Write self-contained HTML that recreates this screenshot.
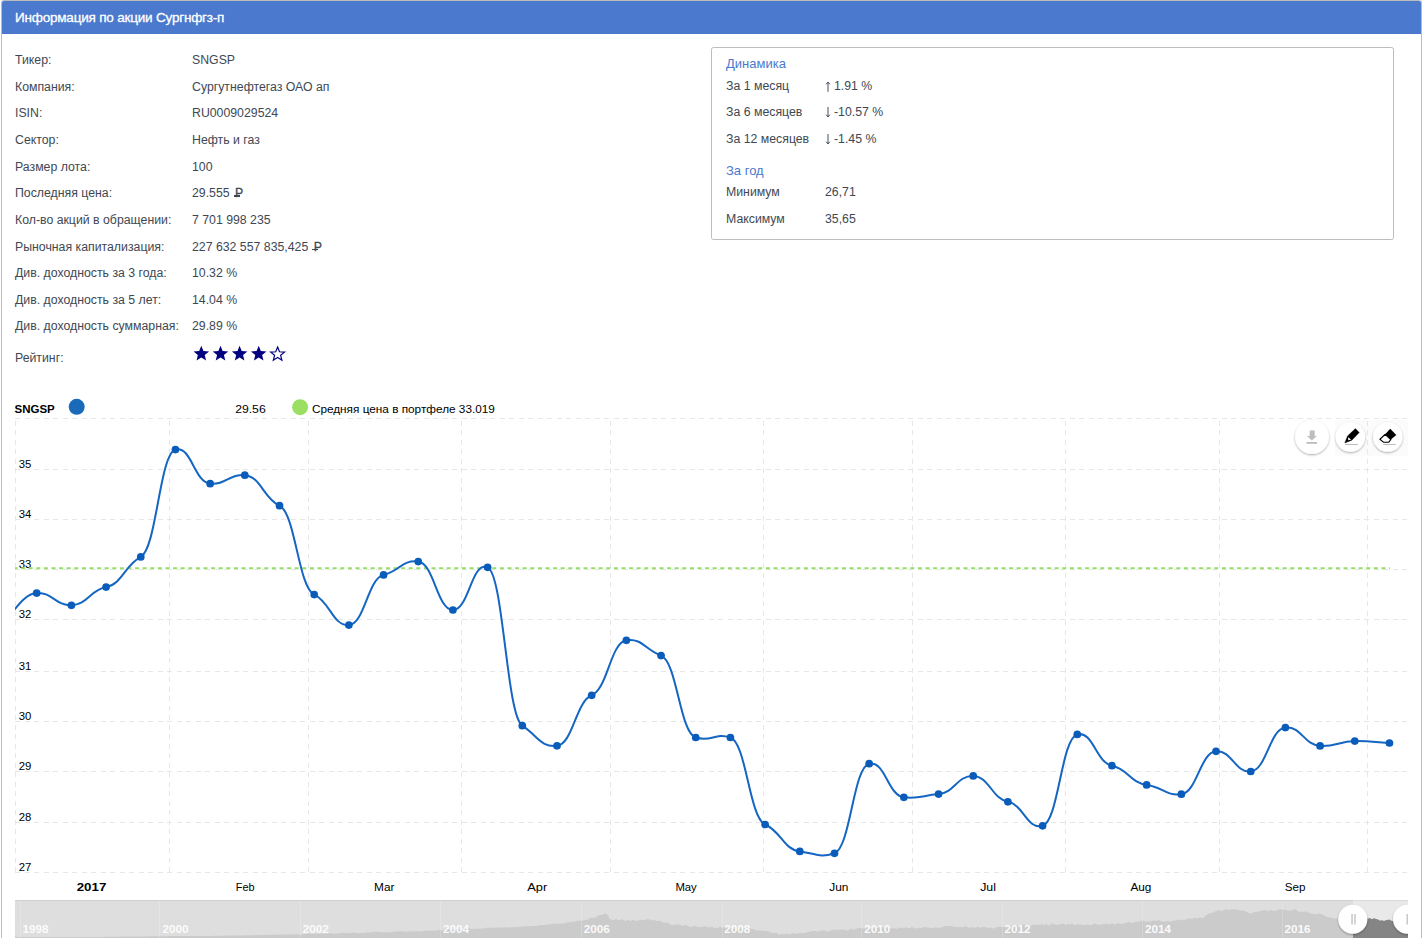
<!DOCTYPE html>
<html><head><meta charset="utf-8">
<style>
html,body{margin:0;padding:0;background:#fff;width:1424px;height:938px;overflow:hidden;position:relative;}
body{font-family:"Liberation Sans",sans-serif;}
.panel{position:absolute;left:1px;top:0;width:1419px;height:960px;border:1px solid #bcbcbc;border-bottom:none;border-radius:3px 3px 0 0;}
.hdr{position:absolute;left:2px;top:1px;width:1419px;height:33px;background:#4a79cd;border-radius:2px 2px 0 0;}
.hdr span{position:absolute;left:13px;top:8.5px;color:#fff;font-size:13.5px;letter-spacing:-0.2px;-webkit-text-stroke:0.3px #fff;white-space:nowrap;}
.row{position:absolute;left:15px;font-size:12.3px;color:#3e4853;white-space:nowrap;}
.val{position:absolute;left:192px;font-size:12.3px;color:#3e4853;white-space:nowrap;}
.box{position:absolute;left:711px;top:47px;width:681px;height:191px;border:1px solid #bdbdbd;border-radius:2.5px;}
.bt{position:absolute;color:#4a79cd;font-size:13px;white-space:nowrap;}
.bl{position:absolute;font-size:12.3px;color:#3e4853;white-space:nowrap;}
.chart{position:absolute;left:0;top:0;}
.rub{position:relative;display:inline-block;margin-left:2px;-webkit-text-stroke:0.3px #3e4853;}
.rub i{position:absolute;left:-1.5px;width:6px;height:1.2px;background:#3e4853;top:9.2px;}
.arr{display:inline-block;width:6px;height:11px;vertical-align:-2px;margin-right:3px;}
</style></head><body>
<div class="panel"></div>
<div class="hdr"><span>Информация по акции Сургнфгз-п</span></div>
<div class="row" style="top:53px">Тикер:</div><div class="val" style="top:53px">SNGSP</div>
<div class="row" style="top:79.7px">Компания:</div><div class="val" style="top:79.7px">Сургутнефтегаз ОАО ап</div>
<div class="row" style="top:106.3px">ISIN:</div><div class="val" style="top:106.3px">RU0009029524</div>
<div class="row" style="top:133px">Сектор:</div><div class="val" style="top:133px">Нефть и газ</div>
<div class="row" style="top:159.7px">Размер лота:</div><div class="val" style="top:159.7px">100</div>
<div class="row" style="top:186.3px">Последняя цена:</div><div class="val" style="top:186.3px">29.555 <span class="rub">Р<i></i></span></div>
<div class="row" style="top:213px">Кол-во акций в обращении:</div><div class="val" style="top:213px">7 701 998 235</div>
<div class="row" style="top:239.7px">Рыночная капитализация:</div><div class="val" style="top:239.7px">227 632 557 835,425 <span class="rub">Р<i></i></span></div>
<div class="row" style="top:266.3px">Див. доходность за 3 года:</div><div class="val" style="top:266.3px">10.32 %</div>
<div class="row" style="top:293px">Див. доходность за 5 лет:</div><div class="val" style="top:293px">14.04 %</div>
<div class="row" style="top:318.7px">Див. доходность суммарная:</div><div class="val" style="top:318.7px">29.89 %</div>
<div class="row" style="top:350.5px">Рейтинг:</div>
<svg style="position:absolute;left:0;top:0" width="300" height="370"><g fill="#000080"><polygon points="201.30,345.80 203.42,351.04 209.05,351.43 204.72,355.06 206.09,360.54 201.30,357.55 196.51,360.54 197.88,355.06 193.55,351.43 199.18,351.04"/><polygon points="220.50,345.80 222.62,351.04 228.25,351.43 223.92,355.06 225.29,360.54 220.50,357.55 215.71,360.54 217.08,355.06 212.75,351.43 218.38,351.04"/><polygon points="239.60,345.80 241.72,351.04 247.35,351.43 243.02,355.06 244.39,360.54 239.60,357.55 234.81,360.54 236.18,355.06 231.85,351.43 237.48,351.04"/><polygon points="258.70,345.80 260.82,351.04 266.45,351.43 262.12,355.06 263.49,360.54 258.70,357.55 253.91,360.54 255.28,355.06 250.95,351.43 256.58,351.04"/></g><polygon points="277.60,347.05 279.48,351.76 284.54,352.09 280.64,355.34 281.89,360.26 277.60,357.55 273.31,360.26 274.56,355.34 270.66,352.09 275.72,351.76" fill="#fff" stroke="#000080" stroke-width="1.2" stroke-linejoin="miter"/></svg>
<div class="box">
<div class="bt" style="left:14px;top:8px">Динамика</div>
<div class="bl" style="left:14px;top:31px">За 1 месяц</div><div class="bl" style="left:113px;top:31px"><svg class="arr" viewBox="0 0 6 11"><path d="M3,10.8 V1.2 M1.1,3.3 L3,1 L4.9,3.3" fill="none" stroke="#3e4853" stroke-width="0.95"/></svg>1.91 %</div>
<div class="bl" style="left:14px;top:57px">За 6 месяцев</div><div class="bl" style="left:113px;top:57px"><svg class="arr" viewBox="0 0 6 11"><path d="M3,0 V9.8 M1.1,7.7 L3,10 L4.9,7.7" fill="none" stroke="#3e4853" stroke-width="0.95"/></svg>-10.57 %</div>
<div class="bl" style="left:14px;top:84px">За 12 месяцев</div><div class="bl" style="left:113px;top:84px"><svg class="arr" viewBox="0 0 6 11"><path d="M3,0 V9.8 M1.1,7.7 L3,10 L4.9,7.7" fill="none" stroke="#3e4853" stroke-width="0.95"/></svg>-1.45 %</div>
<div class="bt" style="left:14px;top:115px">За год</div>
<div class="bl" style="left:14px;top:137px">Минимум</div><div class="bl" style="left:113px;top:137px">26,71</div>
<div class="bl" style="left:14px;top:164px">Максимум</div><div class="bl" style="left:113px;top:164px">35,65</div>
</div>
<svg class="chart" width="1424" height="938" viewBox="0 0 1424 938">
<defs>
<clipPath id="plot"><rect x="15" y="418" width="1392" height="455"/></clipPath>
<clipPath id="nav"><rect x="15" y="900" width="1393" height="38"/></clipPath><clipPath id="sel"><rect x="1353" y="900" width="55" height="38"/></clipPath>
<filter id="sh" x="-30%" y="-30%" width="160%" height="160%"><feGaussianBlur in="SourceAlpha" stdDeviation="1"/><feOffset dy="1"/><feComponentTransfer><feFuncA type="linear" slope="0.35"/></feComponentTransfer><feMerge><feMergeNode/><feMergeNode in="SourceGraphic"/></feMerge></filter>
</defs>
<rect x="1335" y="420" width="73" height="36" fill="#fbfbfb"/>
<g stroke="#e7e7e7" stroke-width="1" stroke-dasharray="5,4.5" fill="none" shape-rendering="crispEdges"><line x1="15" y1="872.5" x2="1407" y2="872.5"/><line x1="15" y1="822.5" x2="1407" y2="822.5"/><line x1="15" y1="771.5" x2="1407" y2="771.5"/><line x1="15" y1="721.5" x2="1407" y2="721.5"/><line x1="15" y1="671.5" x2="1407" y2="671.5"/><line x1="15" y1="619.5" x2="1407" y2="619.5"/><line x1="15" y1="569.5" x2="1407" y2="569.5"/><line x1="15" y1="519.5" x2="1407" y2="519.5"/><line x1="15" y1="469.5" x2="1407" y2="469.5"/><line x1="15" y1="418.5" x2="1407" y2="418.5"/><line x1="15.5" y1="872.4" x2="15.5" y2="418.5"/><line x1="169.5" y1="872.4" x2="169.5" y2="418.5"/><line x1="308.5" y1="872.4" x2="308.5" y2="418.5"/><line x1="461.5" y1="872.4" x2="461.5" y2="418.5"/><line x1="610.5" y1="872.4" x2="610.5" y2="418.5"/><line x1="763.5" y1="872.4" x2="763.5" y2="418.5"/><line x1="912.5" y1="872.4" x2="912.5" y2="418.5"/><line x1="1065.5" y1="872.4" x2="1065.5" y2="418.5"/><line x1="1219.5" y1="872.4" x2="1219.5" y2="418.5"/><line x1="1367.5" y1="872.4" x2="1367.5" y2="418.5"/></g>
<g font-family="Liberation Sans, sans-serif" font-size="10" fill="#000"><text x="18.7" y="870.5" textLength="12.6" lengthAdjust="spacingAndGlyphs">27</text><text x="18.7" y="820.5" textLength="12.6" lengthAdjust="spacingAndGlyphs">28</text><text x="18.7" y="769.5" textLength="12.6" lengthAdjust="spacingAndGlyphs">29</text><text x="18.7" y="719.5" textLength="12.6" lengthAdjust="spacingAndGlyphs">30</text><text x="18.7" y="669.5" textLength="12.6" lengthAdjust="spacingAndGlyphs">31</text><text x="18.7" y="617.5" textLength="12.6" lengthAdjust="spacingAndGlyphs">32</text><text x="18.7" y="567.5" textLength="12.6" lengthAdjust="spacingAndGlyphs">33</text><text x="18.7" y="517.5" textLength="12.6" lengthAdjust="spacingAndGlyphs">34</text><text x="18.7" y="467.5" textLength="12.6" lengthAdjust="spacingAndGlyphs">35</text></g>
<g font-family="Liberation Sans, sans-serif" font-size="10" fill="#000"><text x="76.7" y="890.8" textLength="29.6" lengthAdjust="spacingAndGlyphs" font-weight="bold">2017</text><text x="235.8" y="890.8" textLength="18.8" lengthAdjust="spacingAndGlyphs">Feb</text><text x="374.1" y="890.8" textLength="20.4" lengthAdjust="spacingAndGlyphs">Mar</text><text x="527.2" y="890.8" textLength="20.0" lengthAdjust="spacingAndGlyphs">Apr</text><text x="675.4" y="890.8" textLength="21.4" lengthAdjust="spacingAndGlyphs">May</text><text x="829.2" y="890.8" textLength="19.2" lengthAdjust="spacingAndGlyphs">Jun</text><text x="980.2" y="890.8" textLength="15.8" lengthAdjust="spacingAndGlyphs">Jul</text><text x="1130.4" y="890.8" textLength="21.0" lengthAdjust="spacingAndGlyphs">Aug</text><text x="1284.7" y="890.8" textLength="20.7" lengthAdjust="spacingAndGlyphs">Sep</text></g>
<line x1="13.5" y1="568.2" x2="1390" y2="568.2" stroke="#99dd66" stroke-width="2" stroke-dasharray="4,3.6" clip-path="url(#plot)"/>
<g clip-path="url(#plot)">
<path d="M2.01,622.00 C9.99,620.27 20.74,594.10 36.70,593.10 C52.66,592.10 55.43,605.66 71.39,605.30 C87.34,604.94 90.12,590.00 106.07,587.10 C122.03,584.20 124.80,565.15 140.76,556.90 C156.71,548.65 159.49,453.99 175.44,449.60 C191.40,445.21 194.17,482.16 210.13,483.70 C226.09,485.24 228.86,473.88 244.82,475.20 C260.77,476.52 263.55,498.53 279.50,505.70 C295.46,512.87 298.23,587.43 314.19,594.60 C330.14,601.77 332.92,626.28 348.87,625.10 C364.83,623.92 367.60,578.71 383.56,574.90 C399.52,571.09 402.29,559.49 418.25,561.60 C434.20,563.71 436.98,609.66 452.93,610.00 C468.89,610.34 471.66,560.36 487.62,567.30 C503.57,574.24 506.35,714.99 522.30,725.70 C538.26,736.41 541.03,747.62 556.99,745.80 C572.95,743.98 575.72,701.63 591.68,695.30 C607.63,688.97 610.41,642.68 626.36,640.30 C642.32,637.92 645.09,649.77 661.05,655.60 C677.00,661.43 679.78,732.59 695.73,737.50 C711.69,742.41 714.46,732.28 730.42,737.50 C746.38,742.72 749.15,817.66 765.11,824.50 C781.06,831.34 783.84,849.67 799.79,851.40 C815.75,853.13 818.52,858.56 834.48,853.30 C850.43,848.04 853.21,767.06 869.16,763.70 C885.12,760.34 887.89,795.48 903.85,797.30 C919.81,799.12 922.58,795.38 938.54,794.10 C954.49,792.82 957.27,775.44 973.22,775.90 C989.18,776.36 991.95,798.81 1007.91,801.80 C1023.86,804.79 1026.64,829.84 1042.59,825.80 C1058.55,821.76 1061.32,738.01 1077.28,734.40 C1093.24,730.79 1096.01,762.67 1111.97,765.70 C1127.92,768.73 1130.70,783.19 1146.65,784.90 C1162.61,786.61 1165.38,796.22 1181.34,794.20 C1197.29,792.18 1200.07,752.66 1216.02,751.30 C1231.98,749.94 1234.75,772.92 1250.71,771.50 C1266.67,770.08 1269.44,729.14 1285.40,727.60 C1301.35,726.06 1304.13,745.09 1320.08,745.90 C1336.04,746.71 1338.81,741.27 1354.77,741.10 C1370.72,740.93 1381.48,742.89 1389.45,743.00" fill="none" stroke="#1566c2" stroke-width="2"/>
<g fill="#0a5cba"><circle cx="36.70" cy="593.10" r="3.85"/><circle cx="71.39" cy="605.30" r="3.85"/><circle cx="106.07" cy="587.10" r="3.85"/><circle cx="140.76" cy="556.90" r="3.85"/><circle cx="175.44" cy="449.60" r="3.85"/><circle cx="210.13" cy="483.70" r="3.85"/><circle cx="244.82" cy="475.20" r="3.85"/><circle cx="279.50" cy="505.70" r="3.85"/><circle cx="314.19" cy="594.60" r="3.85"/><circle cx="348.87" cy="625.10" r="3.85"/><circle cx="383.56" cy="574.90" r="3.85"/><circle cx="418.25" cy="561.60" r="3.85"/><circle cx="452.93" cy="610.00" r="3.85"/><circle cx="487.62" cy="567.30" r="3.85"/><circle cx="522.30" cy="725.70" r="3.85"/><circle cx="556.99" cy="745.80" r="3.85"/><circle cx="591.68" cy="695.30" r="3.85"/><circle cx="626.36" cy="640.30" r="3.85"/><circle cx="661.05" cy="655.60" r="3.85"/><circle cx="695.73" cy="737.50" r="3.85"/><circle cx="730.42" cy="737.50" r="3.85"/><circle cx="765.11" cy="824.50" r="3.85"/><circle cx="799.79" cy="851.40" r="3.85"/><circle cx="834.48" cy="853.30" r="3.85"/><circle cx="869.16" cy="763.70" r="3.85"/><circle cx="903.85" cy="797.30" r="3.85"/><circle cx="938.54" cy="794.10" r="3.85"/><circle cx="973.22" cy="775.90" r="3.85"/><circle cx="1007.91" cy="801.80" r="3.85"/><circle cx="1042.59" cy="825.80" r="3.85"/><circle cx="1077.28" cy="734.40" r="3.85"/><circle cx="1111.97" cy="765.70" r="3.85"/><circle cx="1146.65" cy="784.90" r="3.85"/><circle cx="1181.34" cy="794.20" r="3.85"/><circle cx="1216.02" cy="751.30" r="3.85"/><circle cx="1250.71" cy="771.50" r="3.85"/><circle cx="1285.40" cy="727.60" r="3.85"/><circle cx="1320.08" cy="745.90" r="3.85"/><circle cx="1354.77" cy="741.10" r="3.85"/><circle cx="1389.45" cy="743.00" r="3.85"/></g>
</g>
<!-- legend -->
<text x="14.5" y="412.6" font-family="Liberation Sans, sans-serif" font-size="10" font-weight="bold" fill="#000" textLength="40.3" lengthAdjust="spacingAndGlyphs">SNGSP</text>
<circle cx="76.7" cy="406.8" r="8" fill="#1a6aba"/>
<text x="235.2" y="412.6" font-family="Liberation Sans, sans-serif" font-size="10" fill="#000" textLength="30.5" lengthAdjust="spacingAndGlyphs">29.56</text>
<circle cx="300.1" cy="407.2" r="8" fill="#9ade62"/>
<text x="311.9" y="412.6" font-family="Liberation Sans, sans-serif" font-size="10" fill="#000" textLength="183" lengthAdjust="spacingAndGlyphs">Средняя цена в портфеле 33.019</text>
<!-- buttons -->
<g filter="url(#sh)">
<circle cx="1312" cy="437" r="17" fill="#fff"/>
<circle cx="1350.4" cy="437" r="14.7" fill="#fff"/>
<circle cx="1387.7" cy="437" r="14.7" fill="#fff"/>
</g>
<g fill="#bdbdbd"><rect x="1309.7" y="430.5" width="5" height="5.6"/><polygon points="1307,435.9 1316.8,435.9 1311.9,440.4"/><rect x="1306.5" y="442" width="10.5" height="1.8"/></g>
<polygon points="1355.4,428.6 1359.2,432.6 1351.8,440.3 1344.8,442.9 1347.5,436.1" fill="#000" stroke="#000" stroke-width="0.4" stroke-linejoin="round"/>
<polygon points="1348.1,437.2 1351.2,439.4 1348.3,440.2" fill="#fff"/>
<rect x="1345" y="444" width="12.8" height="1" fill="#bbb"/>
<polygon points="1390.2,428.8 1396.3,435 1390.8,439.6 1385.2,434.3" fill="#000"/>
<polygon points="1385.2,434.3 1390.8,439.6 1388.8,442.2 1383.5,442.2 1379.9,439.3" fill="#fff" stroke="#000" stroke-width="1.1" stroke-linejoin="miter"/>
<rect x="1383.3" y="444" width="12.5" height="1" fill="#bbb"/>
<!-- navigator -->
<g clip-path="url(#nav)">
<rect x="15" y="900" width="1393" height="38" fill="#dedede"/>
<rect x="1353" y="900" width="55" height="38" fill="#e9e9e9"/>
<path d="M15.0,938.0 L15.0,936.0 L16.0,937.0 L18.0,937.0 L20.0,937.0 L22.0,937.0 L24.0,937.0 L26.0,937.0 L28.0,937.0 L30.0,937.0 L32.0,937.0 L34.0,937.0 L36.0,937.0 L38.0,937.0 L40.0,937.0 L42.0,937.0 L44.0,937.0 L46.0,937.0 L48.0,937.0 L50.0,937.0 L52.0,937.0 L54.0,937.0 L56.0,937.0 L58.0,937.0 L60.0,937.0 L62.0,937.0 L64.0,937.0 L66.0,937.0 L68.0,937.0 L70.0,937.0 L72.0,937.0 L74.0,937.0 L76.0,937.0 L78.0,937.0 L80.0,937.0 L82.0,937.0 L84.0,937.0 L86.0,937.0 L88.0,937.0 L90.0,937.0 L92.0,937.0 L94.0,937.0 L96.0,937.0 L98.0,937.0 L100.0,937.0 L102.0,937.0 L104.0,937.0 L106.0,936.8 L108.0,936.8 L110.0,936.8 L112.0,936.7 L114.0,936.7 L116.0,936.7 L118.0,936.7 L120.0,936.6 L122.0,936.6 L124.0,936.6 L126.0,936.6 L128.0,936.6 L130.0,936.5 L132.0,936.5 L134.0,936.5 L136.0,936.5 L138.0,936.4 L140.0,936.4 L142.0,936.4 L144.0,936.4 L146.0,936.4 L148.0,936.3 L150.0,936.3 L152.0,936.3 L154.0,936.3 L156.0,936.2 L158.0,936.2 L160.0,936.2 L162.0,936.2 L164.0,936.2 L166.0,936.2 L168.0,936.1 L170.0,936.1 L172.0,936.1 L174.0,936.1 L176.0,936.1 L178.0,936.1 L180.0,936.1 L182.0,936.1 L184.0,936.0 L186.0,936.0 L188.0,936.0 L190.0,936.0 L192.0,936.0 L194.0,936.0 L196.0,936.0 L198.0,935.9 L200.0,935.9 L202.0,935.9 L204.0,935.9 L206.0,935.9 L208.0,935.9 L210.0,935.9 L212.0,935.9 L214.0,935.8 L216.0,935.8 L218.0,935.8 L220.0,935.8 L222.0,935.8 L224.0,935.7 L226.0,935.7 L228.0,935.6 L230.0,935.6 L232.0,935.6 L234.0,935.5 L236.0,935.5 L238.0,935.4 L240.0,935.4 L242.0,935.4 L244.0,935.3 L246.0,935.3 L248.0,935.2 L250.0,935.2 L252.0,935.2 L254.0,935.1 L256.0,935.1 L258.0,935.0 L260.0,935.0 L262.0,935.0 L264.0,934.9 L266.0,934.9 L268.0,934.8 L270.0,934.8 L272.0,934.8 L274.0,934.7 L276.0,934.7 L278.0,934.6 L280.0,934.6 L282.0,934.6 L284.0,934.5 L286.0,934.5 L288.0,934.4 L290.0,934.4 L292.0,934.4 L294.0,934.3 L296.0,934.3 L298.0,934.2 L300.0,934.5 L302.0,934.6 L304.0,934.1 L306.0,934.0 L308.0,933.6 L310.0,933.5 L312.0,933.7 L314.0,933.6 L316.0,934.1 L318.0,933.4 L320.0,933.2 L322.0,934.1 L324.0,933.6 L326.0,933.2 L328.0,933.5 L330.0,932.9 L332.0,933.4 L334.0,933.8 L336.0,933.6 L338.0,933.4 L340.0,932.9 L342.0,933.0 L344.0,932.7 L346.0,933.3 L348.0,933.0 L350.0,933.2 L352.0,932.7 L354.0,932.5 L356.0,933.1 L358.0,933.2 L360.0,933.0 L362.0,932.9 L364.0,932.9 L366.0,932.7 L368.0,932.2 L370.0,932.4 L372.0,932.2 L374.0,931.8 L376.0,931.8 L378.0,932.0 L380.0,931.9 L382.0,932.3 L384.0,932.5 L386.0,931.9 L388.0,932.3 L390.0,932.3 L392.0,932.3 L394.0,931.6 L396.0,931.4 L398.0,931.4 L400.0,931.3 L402.0,931.3 L404.0,931.6 L406.0,931.8 L408.0,931.7 L410.0,931.3 L412.0,931.4 L414.0,931.5 L416.0,930.8 L418.0,931.3 L420.0,931.5 L422.0,931.3 L424.0,931.2 L426.0,930.8 L428.0,930.4 L430.0,930.9 L432.0,930.3 L434.0,930.7 L436.0,930.7 L438.0,930.0 L440.0,929.9 L442.0,930.4 L444.0,930.1 L446.0,929.4 L448.0,929.3 L450.0,929.2 L452.0,929.9 L454.0,929.7 L456.0,929.0 L458.0,929.6 L460.0,929.7 L462.0,929.3 L464.0,928.9 L466.0,929.0 L468.0,928.5 L470.0,928.3 L472.0,929.2 L474.0,928.8 L476.0,928.6 L478.0,928.9 L480.0,928.3 L482.0,928.7 L484.0,928.5 L486.0,927.8 L488.0,927.8 L490.0,927.8 L492.0,927.6 L494.0,927.9 L496.0,927.5 L498.0,927.6 L500.0,927.2 L502.0,927.9 L504.0,927.3 L506.0,927.3 L508.0,927.4 L510.0,927.6 L512.0,927.1 L514.0,927.5 L516.0,927.0 L518.0,927.0 L520.0,926.9 L522.0,926.3 L524.0,926.7 L526.0,926.3 L528.0,926.0 L530.0,926.6 L532.0,925.8 L534.0,925.9 L536.0,925.9 L538.0,925.6 L540.0,925.1 L542.0,925.1 L544.0,925.0 L546.0,925.0 L548.0,924.1 L550.0,924.4 L552.0,923.8 L554.0,923.7 L556.0,924.0 L558.0,923.5 L560.0,923.4 L562.0,923.6 L564.0,923.7 L566.0,922.5 L568.0,922.6 L570.0,922.0 L572.0,921.7 L574.0,921.8 L576.0,921.0 L578.0,920.8 L580.0,920.4 L582.0,920.9 L584.0,920.0 L586.0,919.9 L588.0,919.5 L590.0,917.7 L592.0,917.8 L594.0,918.1 L596.0,917.4 L598.0,915.6 L600.0,915.1 L602.0,915.3 L604.0,913.9 L606.0,913.5 L608.0,915.6 L610.0,919.3 L612.0,919.7 L614.0,920.1 L616.0,918.7 L618.0,920.0 L620.0,920.0 L622.0,919.2 L624.0,920.8 L626.0,921.1 L628.0,919.7 L630.0,921.2 L632.0,920.0 L634.0,920.1 L636.0,921.1 L638.0,920.7 L640.0,919.4 L642.0,919.9 L644.0,920.0 L646.0,919.6 L648.0,919.3 L650.0,919.5 L652.0,920.5 L654.0,919.5 L656.0,920.9 L658.0,921.1 L660.0,920.7 L662.0,921.7 L664.0,922.7 L666.0,922.8 L668.0,922.3 L670.0,924.6 L672.0,924.6 L674.0,925.3 L676.0,924.0 L678.0,924.7 L680.0,924.5 L682.0,926.1 L684.0,925.2 L686.0,925.1 L688.0,925.8 L690.0,926.9 L692.0,926.8 L694.0,925.8 L696.0,925.8 L698.0,927.4 L700.0,926.9 L702.0,927.3 L704.0,926.2 L706.0,926.2 L708.0,927.6 L710.0,927.3 L712.0,926.5 L714.0,928.3 L716.0,927.7 L718.0,928.0 L720.0,926.6 L722.0,928.1 L724.0,926.7 L726.0,928.4 L728.0,927.7 L730.0,927.6 L732.0,928.1 L734.0,929.0 L736.0,927.8 L738.0,927.6 L740.0,928.5 L742.0,928.1 L744.0,927.9 L746.0,928.2 L748.0,928.1 L750.0,928.5 L752.0,929.0 L754.0,929.3 L756.0,930.5 L758.0,929.9 L760.0,930.7 L762.0,930.4 L764.0,931.1 L766.0,930.7 L768.0,931.5 L770.0,931.4 L772.0,933.2 L774.0,933.1 L776.0,932.8 L778.0,933.7 L780.0,934.9 L782.0,933.3 L784.0,934.6 L786.0,933.7 L788.0,933.7 L790.0,934.2 L792.0,933.1 L794.0,933.2 L796.0,933.4 L798.0,933.9 L800.0,932.4 L802.0,933.3 L804.0,932.9 L806.0,932.6 L808.0,932.0 L810.0,931.7 L812.0,930.9 L814.0,930.9 L816.0,930.7 L818.0,931.9 L820.0,930.8 L822.0,930.5 L824.0,930.2 L826.0,931.5 L828.0,931.5 L830.0,930.9 L832.0,930.0 L834.0,929.8 L836.0,929.8 L838.0,930.0 L840.0,929.2 L842.0,929.7 L844.0,929.2 L846.0,930.4 L848.0,930.3 L850.0,929.3 L852.0,928.6 L854.0,929.9 L856.0,928.5 L858.0,928.5 L860.0,927.7 L862.0,928.3 L864.0,928.5 L866.0,928.5 L868.0,927.9 L870.0,928.4 L872.0,927.4 L874.0,927.9 L876.0,927.5 L878.0,928.1 L880.0,927.3 L882.0,927.3 L884.0,927.8 L886.0,927.6 L888.0,928.3 L890.0,928.1 L892.0,928.5 L894.0,928.3 L896.0,928.4 L898.0,928.7 L900.0,927.7 L902.0,927.5 L904.0,928.8 L906.0,927.1 L908.0,928.2 L910.0,928.0 L912.0,926.8 L914.0,928.3 L916.0,928.4 L918.0,927.8 L920.0,928.0 L922.0,928.1 L924.0,926.7 L926.0,927.5 L928.0,927.4 L930.0,928.0 L932.0,927.9 L934.0,927.8 L936.0,927.3 L938.0,927.9 L940.0,927.4 L942.0,927.3 L944.0,926.3 L946.0,925.9 L948.0,926.0 L950.0,926.4 L952.0,925.8 L954.0,927.3 L956.0,926.8 L958.0,927.0 L960.0,927.1 L962.0,927.3 L964.0,927.0 L966.0,926.1 L968.0,927.7 L970.0,927.7 L972.0,927.3 L974.0,927.4 L976.0,927.7 L978.0,926.6 L980.0,928.0 L982.0,927.1 L984.0,926.8 L986.0,927.3 L988.0,928.3 L990.0,927.3 L992.0,928.2 L994.0,928.5 L996.0,927.3 L998.0,926.8 L1000.0,926.8 L1002.0,927.0 L1004.0,927.0 L1006.0,926.6 L1008.0,926.6 L1010.0,925.4 L1012.0,925.4 L1014.0,925.5 L1016.0,926.4 L1018.0,925.4 L1020.0,925.9 L1022.0,924.7 L1024.0,924.7 L1026.0,925.0 L1028.0,925.7 L1030.0,925.6 L1032.0,925.5 L1034.0,924.6 L1036.0,925.0 L1038.0,924.8 L1040.0,924.7 L1042.0,923.9 L1044.0,925.4 L1046.0,923.9 L1048.0,925.3 L1050.0,925.2 L1052.0,923.2 L1054.0,924.0 L1056.0,924.8 L1058.0,925.1 L1060.0,924.1 L1062.0,923.8 L1064.0,923.7 L1066.0,925.2 L1068.0,923.7 L1070.0,924.5 L1072.0,923.7 L1074.0,924.4 L1076.0,925.3 L1078.0,923.7 L1080.0,925.1 L1082.0,924.5 L1084.0,925.3 L1086.0,925.0 L1088.0,924.1 L1090.0,925.4 L1092.0,924.6 L1094.0,923.8 L1096.0,923.7 L1098.0,924.7 L1100.0,924.7 L1102.0,924.3 L1104.0,923.8 L1106.0,924.1 L1108.0,923.8 L1110.0,924.7 L1112.0,922.9 L1114.0,924.2 L1116.0,924.3 L1118.0,922.7 L1120.0,924.1 L1122.0,923.5 L1124.0,923.7 L1126.0,922.4 L1128.0,922.4 L1130.0,922.2 L1132.0,923.3 L1134.0,922.3 L1136.0,921.7 L1138.0,921.7 L1140.0,921.2 L1142.0,920.6 L1144.0,920.6 L1146.0,922.0 L1148.0,920.9 L1150.0,922.1 L1152.0,920.6 L1154.0,920.6 L1156.0,921.0 L1158.0,920.3 L1160.0,920.6 L1162.0,921.7 L1164.0,921.5 L1166.0,921.3 L1168.0,920.9 L1170.0,921.4 L1172.0,921.3 L1174.0,920.5 L1176.0,920.8 L1178.0,919.2 L1180.0,920.4 L1182.0,919.6 L1184.0,920.1 L1186.0,919.6 L1188.0,918.7 L1190.0,918.1 L1192.0,919.6 L1194.0,917.8 L1196.0,918.3 L1198.0,917.9 L1200.0,917.6 L1202.0,918.1 L1204.0,917.4 L1206.0,914.7 L1208.0,914.3 L1210.0,913.0 L1212.0,912.9 L1214.0,912.0 L1216.0,911.0 L1218.0,910.5 L1220.0,910.2 L1222.0,911.2 L1224.0,910.0 L1226.0,909.0 L1228.0,910.0 L1230.0,910.0 L1232.0,909.3 L1234.0,909.0 L1236.0,909.5 L1238.0,909.7 L1240.0,910.6 L1242.0,910.4 L1244.0,911.1 L1246.0,911.5 L1248.0,912.5 L1250.0,913.4 L1252.0,912.9 L1254.0,912.0 L1256.0,911.7 L1258.0,911.7 L1260.0,911.1 L1262.0,910.8 L1264.0,909.9 L1266.0,910.2 L1268.0,911.5 L1270.0,909.7 L1272.0,910.4 L1274.0,910.6 L1276.0,911.0 L1278.0,909.6 L1280.0,909.6 L1282.0,909.5 L1284.0,909.7 L1286.0,909.8 L1288.0,910.7 L1290.0,910.4 L1292.0,910.7 L1294.0,909.3 L1296.0,909.7 L1298.0,911.3 L1300.0,912.0 L1302.0,911.5 L1304.0,912.0 L1306.0,911.2 L1308.0,912.2 L1310.0,913.6 L1312.0,913.7 L1314.0,914.1 L1316.0,914.6 L1318.0,913.5 L1320.0,913.7 L1322.0,914.3 L1324.0,915.5 L1326.0,916.3 L1328.0,917.4 L1330.0,917.4 L1332.0,917.8 L1334.0,918.5 L1336.0,918.4 L1338.0,919.1 L1340.0,917.9 L1342.0,919.1 L1344.0,917.8 L1346.0,918.9 L1348.0,918.1 L1350.0,917.2 L1352.0,916.6 L1354.0,916.8 L1356.0,917.8 L1358.0,918.1 L1360.0,917.1 L1362.0,917.2 L1364.0,918.3 L1366.0,918.6 L1368.0,918.4 L1370.0,918.2 L1372.0,919.2 L1374.0,918.2 L1376.0,919.0 L1378.0,919.5 L1380.0,920.7 L1382.0,920.2 L1384.0,920.9 L1386.0,920.3 L1388.0,919.8 L1390.0,919.8 L1392.0,921.2 L1394.0,920.7 L1396.0,919.9 L1398.0,919.3 L1400.0,920.3 L1402.0,920.6 L1404.0,920.1 L1406.0,919.8 L1408.0,920.3 L1408.0,938.0 Z" fill="#cbcbcb"/>
<g clip-path="url(#sel)"><path d="M15.0,938.0 L15.0,936.0 L16.0,937.0 L18.0,937.0 L20.0,937.0 L22.0,937.0 L24.0,937.0 L26.0,937.0 L28.0,937.0 L30.0,937.0 L32.0,937.0 L34.0,937.0 L36.0,937.0 L38.0,937.0 L40.0,937.0 L42.0,937.0 L44.0,937.0 L46.0,937.0 L48.0,937.0 L50.0,937.0 L52.0,937.0 L54.0,937.0 L56.0,937.0 L58.0,937.0 L60.0,937.0 L62.0,937.0 L64.0,937.0 L66.0,937.0 L68.0,937.0 L70.0,937.0 L72.0,937.0 L74.0,937.0 L76.0,937.0 L78.0,937.0 L80.0,937.0 L82.0,937.0 L84.0,937.0 L86.0,937.0 L88.0,937.0 L90.0,937.0 L92.0,937.0 L94.0,937.0 L96.0,937.0 L98.0,937.0 L100.0,937.0 L102.0,937.0 L104.0,937.0 L106.0,936.8 L108.0,936.8 L110.0,936.8 L112.0,936.7 L114.0,936.7 L116.0,936.7 L118.0,936.7 L120.0,936.6 L122.0,936.6 L124.0,936.6 L126.0,936.6 L128.0,936.6 L130.0,936.5 L132.0,936.5 L134.0,936.5 L136.0,936.5 L138.0,936.4 L140.0,936.4 L142.0,936.4 L144.0,936.4 L146.0,936.4 L148.0,936.3 L150.0,936.3 L152.0,936.3 L154.0,936.3 L156.0,936.2 L158.0,936.2 L160.0,936.2 L162.0,936.2 L164.0,936.2 L166.0,936.2 L168.0,936.1 L170.0,936.1 L172.0,936.1 L174.0,936.1 L176.0,936.1 L178.0,936.1 L180.0,936.1 L182.0,936.1 L184.0,936.0 L186.0,936.0 L188.0,936.0 L190.0,936.0 L192.0,936.0 L194.0,936.0 L196.0,936.0 L198.0,935.9 L200.0,935.9 L202.0,935.9 L204.0,935.9 L206.0,935.9 L208.0,935.9 L210.0,935.9 L212.0,935.9 L214.0,935.8 L216.0,935.8 L218.0,935.8 L220.0,935.8 L222.0,935.8 L224.0,935.7 L226.0,935.7 L228.0,935.6 L230.0,935.6 L232.0,935.6 L234.0,935.5 L236.0,935.5 L238.0,935.4 L240.0,935.4 L242.0,935.4 L244.0,935.3 L246.0,935.3 L248.0,935.2 L250.0,935.2 L252.0,935.2 L254.0,935.1 L256.0,935.1 L258.0,935.0 L260.0,935.0 L262.0,935.0 L264.0,934.9 L266.0,934.9 L268.0,934.8 L270.0,934.8 L272.0,934.8 L274.0,934.7 L276.0,934.7 L278.0,934.6 L280.0,934.6 L282.0,934.6 L284.0,934.5 L286.0,934.5 L288.0,934.4 L290.0,934.4 L292.0,934.4 L294.0,934.3 L296.0,934.3 L298.0,934.2 L300.0,934.5 L302.0,934.6 L304.0,934.1 L306.0,934.0 L308.0,933.6 L310.0,933.5 L312.0,933.7 L314.0,933.6 L316.0,934.1 L318.0,933.4 L320.0,933.2 L322.0,934.1 L324.0,933.6 L326.0,933.2 L328.0,933.5 L330.0,932.9 L332.0,933.4 L334.0,933.8 L336.0,933.6 L338.0,933.4 L340.0,932.9 L342.0,933.0 L344.0,932.7 L346.0,933.3 L348.0,933.0 L350.0,933.2 L352.0,932.7 L354.0,932.5 L356.0,933.1 L358.0,933.2 L360.0,933.0 L362.0,932.9 L364.0,932.9 L366.0,932.7 L368.0,932.2 L370.0,932.4 L372.0,932.2 L374.0,931.8 L376.0,931.8 L378.0,932.0 L380.0,931.9 L382.0,932.3 L384.0,932.5 L386.0,931.9 L388.0,932.3 L390.0,932.3 L392.0,932.3 L394.0,931.6 L396.0,931.4 L398.0,931.4 L400.0,931.3 L402.0,931.3 L404.0,931.6 L406.0,931.8 L408.0,931.7 L410.0,931.3 L412.0,931.4 L414.0,931.5 L416.0,930.8 L418.0,931.3 L420.0,931.5 L422.0,931.3 L424.0,931.2 L426.0,930.8 L428.0,930.4 L430.0,930.9 L432.0,930.3 L434.0,930.7 L436.0,930.7 L438.0,930.0 L440.0,929.9 L442.0,930.4 L444.0,930.1 L446.0,929.4 L448.0,929.3 L450.0,929.2 L452.0,929.9 L454.0,929.7 L456.0,929.0 L458.0,929.6 L460.0,929.7 L462.0,929.3 L464.0,928.9 L466.0,929.0 L468.0,928.5 L470.0,928.3 L472.0,929.2 L474.0,928.8 L476.0,928.6 L478.0,928.9 L480.0,928.3 L482.0,928.7 L484.0,928.5 L486.0,927.8 L488.0,927.8 L490.0,927.8 L492.0,927.6 L494.0,927.9 L496.0,927.5 L498.0,927.6 L500.0,927.2 L502.0,927.9 L504.0,927.3 L506.0,927.3 L508.0,927.4 L510.0,927.6 L512.0,927.1 L514.0,927.5 L516.0,927.0 L518.0,927.0 L520.0,926.9 L522.0,926.3 L524.0,926.7 L526.0,926.3 L528.0,926.0 L530.0,926.6 L532.0,925.8 L534.0,925.9 L536.0,925.9 L538.0,925.6 L540.0,925.1 L542.0,925.1 L544.0,925.0 L546.0,925.0 L548.0,924.1 L550.0,924.4 L552.0,923.8 L554.0,923.7 L556.0,924.0 L558.0,923.5 L560.0,923.4 L562.0,923.6 L564.0,923.7 L566.0,922.5 L568.0,922.6 L570.0,922.0 L572.0,921.7 L574.0,921.8 L576.0,921.0 L578.0,920.8 L580.0,920.4 L582.0,920.9 L584.0,920.0 L586.0,919.9 L588.0,919.5 L590.0,917.7 L592.0,917.8 L594.0,918.1 L596.0,917.4 L598.0,915.6 L600.0,915.1 L602.0,915.3 L604.0,913.9 L606.0,913.5 L608.0,915.6 L610.0,919.3 L612.0,919.7 L614.0,920.1 L616.0,918.7 L618.0,920.0 L620.0,920.0 L622.0,919.2 L624.0,920.8 L626.0,921.1 L628.0,919.7 L630.0,921.2 L632.0,920.0 L634.0,920.1 L636.0,921.1 L638.0,920.7 L640.0,919.4 L642.0,919.9 L644.0,920.0 L646.0,919.6 L648.0,919.3 L650.0,919.5 L652.0,920.5 L654.0,919.5 L656.0,920.9 L658.0,921.1 L660.0,920.7 L662.0,921.7 L664.0,922.7 L666.0,922.8 L668.0,922.3 L670.0,924.6 L672.0,924.6 L674.0,925.3 L676.0,924.0 L678.0,924.7 L680.0,924.5 L682.0,926.1 L684.0,925.2 L686.0,925.1 L688.0,925.8 L690.0,926.9 L692.0,926.8 L694.0,925.8 L696.0,925.8 L698.0,927.4 L700.0,926.9 L702.0,927.3 L704.0,926.2 L706.0,926.2 L708.0,927.6 L710.0,927.3 L712.0,926.5 L714.0,928.3 L716.0,927.7 L718.0,928.0 L720.0,926.6 L722.0,928.1 L724.0,926.7 L726.0,928.4 L728.0,927.7 L730.0,927.6 L732.0,928.1 L734.0,929.0 L736.0,927.8 L738.0,927.6 L740.0,928.5 L742.0,928.1 L744.0,927.9 L746.0,928.2 L748.0,928.1 L750.0,928.5 L752.0,929.0 L754.0,929.3 L756.0,930.5 L758.0,929.9 L760.0,930.7 L762.0,930.4 L764.0,931.1 L766.0,930.7 L768.0,931.5 L770.0,931.4 L772.0,933.2 L774.0,933.1 L776.0,932.8 L778.0,933.7 L780.0,934.9 L782.0,933.3 L784.0,934.6 L786.0,933.7 L788.0,933.7 L790.0,934.2 L792.0,933.1 L794.0,933.2 L796.0,933.4 L798.0,933.9 L800.0,932.4 L802.0,933.3 L804.0,932.9 L806.0,932.6 L808.0,932.0 L810.0,931.7 L812.0,930.9 L814.0,930.9 L816.0,930.7 L818.0,931.9 L820.0,930.8 L822.0,930.5 L824.0,930.2 L826.0,931.5 L828.0,931.5 L830.0,930.9 L832.0,930.0 L834.0,929.8 L836.0,929.8 L838.0,930.0 L840.0,929.2 L842.0,929.7 L844.0,929.2 L846.0,930.4 L848.0,930.3 L850.0,929.3 L852.0,928.6 L854.0,929.9 L856.0,928.5 L858.0,928.5 L860.0,927.7 L862.0,928.3 L864.0,928.5 L866.0,928.5 L868.0,927.9 L870.0,928.4 L872.0,927.4 L874.0,927.9 L876.0,927.5 L878.0,928.1 L880.0,927.3 L882.0,927.3 L884.0,927.8 L886.0,927.6 L888.0,928.3 L890.0,928.1 L892.0,928.5 L894.0,928.3 L896.0,928.4 L898.0,928.7 L900.0,927.7 L902.0,927.5 L904.0,928.8 L906.0,927.1 L908.0,928.2 L910.0,928.0 L912.0,926.8 L914.0,928.3 L916.0,928.4 L918.0,927.8 L920.0,928.0 L922.0,928.1 L924.0,926.7 L926.0,927.5 L928.0,927.4 L930.0,928.0 L932.0,927.9 L934.0,927.8 L936.0,927.3 L938.0,927.9 L940.0,927.4 L942.0,927.3 L944.0,926.3 L946.0,925.9 L948.0,926.0 L950.0,926.4 L952.0,925.8 L954.0,927.3 L956.0,926.8 L958.0,927.0 L960.0,927.1 L962.0,927.3 L964.0,927.0 L966.0,926.1 L968.0,927.7 L970.0,927.7 L972.0,927.3 L974.0,927.4 L976.0,927.7 L978.0,926.6 L980.0,928.0 L982.0,927.1 L984.0,926.8 L986.0,927.3 L988.0,928.3 L990.0,927.3 L992.0,928.2 L994.0,928.5 L996.0,927.3 L998.0,926.8 L1000.0,926.8 L1002.0,927.0 L1004.0,927.0 L1006.0,926.6 L1008.0,926.6 L1010.0,925.4 L1012.0,925.4 L1014.0,925.5 L1016.0,926.4 L1018.0,925.4 L1020.0,925.9 L1022.0,924.7 L1024.0,924.7 L1026.0,925.0 L1028.0,925.7 L1030.0,925.6 L1032.0,925.5 L1034.0,924.6 L1036.0,925.0 L1038.0,924.8 L1040.0,924.7 L1042.0,923.9 L1044.0,925.4 L1046.0,923.9 L1048.0,925.3 L1050.0,925.2 L1052.0,923.2 L1054.0,924.0 L1056.0,924.8 L1058.0,925.1 L1060.0,924.1 L1062.0,923.8 L1064.0,923.7 L1066.0,925.2 L1068.0,923.7 L1070.0,924.5 L1072.0,923.7 L1074.0,924.4 L1076.0,925.3 L1078.0,923.7 L1080.0,925.1 L1082.0,924.5 L1084.0,925.3 L1086.0,925.0 L1088.0,924.1 L1090.0,925.4 L1092.0,924.6 L1094.0,923.8 L1096.0,923.7 L1098.0,924.7 L1100.0,924.7 L1102.0,924.3 L1104.0,923.8 L1106.0,924.1 L1108.0,923.8 L1110.0,924.7 L1112.0,922.9 L1114.0,924.2 L1116.0,924.3 L1118.0,922.7 L1120.0,924.1 L1122.0,923.5 L1124.0,923.7 L1126.0,922.4 L1128.0,922.4 L1130.0,922.2 L1132.0,923.3 L1134.0,922.3 L1136.0,921.7 L1138.0,921.7 L1140.0,921.2 L1142.0,920.6 L1144.0,920.6 L1146.0,922.0 L1148.0,920.9 L1150.0,922.1 L1152.0,920.6 L1154.0,920.6 L1156.0,921.0 L1158.0,920.3 L1160.0,920.6 L1162.0,921.7 L1164.0,921.5 L1166.0,921.3 L1168.0,920.9 L1170.0,921.4 L1172.0,921.3 L1174.0,920.5 L1176.0,920.8 L1178.0,919.2 L1180.0,920.4 L1182.0,919.6 L1184.0,920.1 L1186.0,919.6 L1188.0,918.7 L1190.0,918.1 L1192.0,919.6 L1194.0,917.8 L1196.0,918.3 L1198.0,917.9 L1200.0,917.6 L1202.0,918.1 L1204.0,917.4 L1206.0,914.7 L1208.0,914.3 L1210.0,913.0 L1212.0,912.9 L1214.0,912.0 L1216.0,911.0 L1218.0,910.5 L1220.0,910.2 L1222.0,911.2 L1224.0,910.0 L1226.0,909.0 L1228.0,910.0 L1230.0,910.0 L1232.0,909.3 L1234.0,909.0 L1236.0,909.5 L1238.0,909.7 L1240.0,910.6 L1242.0,910.4 L1244.0,911.1 L1246.0,911.5 L1248.0,912.5 L1250.0,913.4 L1252.0,912.9 L1254.0,912.0 L1256.0,911.7 L1258.0,911.7 L1260.0,911.1 L1262.0,910.8 L1264.0,909.9 L1266.0,910.2 L1268.0,911.5 L1270.0,909.7 L1272.0,910.4 L1274.0,910.6 L1276.0,911.0 L1278.0,909.6 L1280.0,909.6 L1282.0,909.5 L1284.0,909.7 L1286.0,909.8 L1288.0,910.7 L1290.0,910.4 L1292.0,910.7 L1294.0,909.3 L1296.0,909.7 L1298.0,911.3 L1300.0,912.0 L1302.0,911.5 L1304.0,912.0 L1306.0,911.2 L1308.0,912.2 L1310.0,913.6 L1312.0,913.7 L1314.0,914.1 L1316.0,914.6 L1318.0,913.5 L1320.0,913.7 L1322.0,914.3 L1324.0,915.5 L1326.0,916.3 L1328.0,917.4 L1330.0,917.4 L1332.0,917.8 L1334.0,918.5 L1336.0,918.4 L1338.0,919.1 L1340.0,917.9 L1342.0,919.1 L1344.0,917.8 L1346.0,918.9 L1348.0,918.1 L1350.0,917.2 L1352.0,916.6 L1354.0,916.8 L1356.0,917.8 L1358.0,918.1 L1360.0,917.1 L1362.0,917.2 L1364.0,918.3 L1366.0,918.6 L1368.0,918.4 L1370.0,918.2 L1372.0,919.2 L1374.0,918.2 L1376.0,919.0 L1378.0,919.5 L1380.0,920.7 L1382.0,920.2 L1384.0,920.9 L1386.0,920.3 L1388.0,919.8 L1390.0,919.8 L1392.0,921.2 L1394.0,920.7 L1396.0,919.9 L1398.0,919.3 L1400.0,920.3 L1402.0,920.6 L1404.0,920.1 L1406.0,919.8 L1408.0,920.3 L1408.0,938.0 Z" fill="#858585"/></g>
<g stroke="#fff" stroke-opacity="0.18" stroke-width="1"><line x1="20.5" y1="901" x2="20.5" y2="938"/><line x1="159.5" y1="901" x2="159.5" y2="938"/><line x1="300.5" y1="901" x2="300.5" y2="938"/><line x1="440.5" y1="901" x2="440.5" y2="938"/><line x1="581.5" y1="901" x2="581.5" y2="938"/><line x1="722.5" y1="901" x2="722.5" y2="938"/><line x1="861.5" y1="901" x2="861.5" y2="938"/><line x1="1002.5" y1="901" x2="1002.5" y2="938"/><line x1="1142.5" y1="901" x2="1142.5" y2="938"/><line x1="1282.5" y1="901" x2="1282.5" y2="938"/></g>
<rect x="15" y="900" width="1338" height="1" fill="#cfcfcf"/><rect x="1353" y="900" width="55" height="1" fill="#dadada"/>
<g font-family="Liberation Sans, sans-serif" font-size="10" font-weight="bold" fill="#fff" fill-opacity="0.92"><text x="22.4" y="933.0" textLength="26.0" lengthAdjust="spacingAndGlyphs">1998</text><text x="162.5" y="933.0" textLength="26.0" lengthAdjust="spacingAndGlyphs">2000</text><text x="302.8" y="933.0" textLength="26.0" lengthAdjust="spacingAndGlyphs">2002</text><text x="443.0" y="933.0" textLength="26.0" lengthAdjust="spacingAndGlyphs">2004</text><text x="583.8" y="933.0" textLength="26.0" lengthAdjust="spacingAndGlyphs">2006</text><text x="724.3" y="933.0" textLength="26.0" lengthAdjust="spacingAndGlyphs">2008</text><text x="864.3" y="933.0" textLength="26.0" lengthAdjust="spacingAndGlyphs">2010</text><text x="1004.5" y="933.0" textLength="26.0" lengthAdjust="spacingAndGlyphs">2012</text><text x="1145.0" y="933.0" textLength="26.0" lengthAdjust="spacingAndGlyphs">2014</text><text x="1284.5" y="933.0" textLength="26.0" lengthAdjust="spacingAndGlyphs">2016</text></g>
<g filter="url(#sh)"><circle cx="1352.8" cy="919.3" r="14.5" fill="#fff"/><circle cx="1407.5" cy="919.3" r="14.5" fill="#fff"/></g>
<g fill="#c8c8c8"><rect x="1351.3" y="914" width="1.5" height="10.5"/><rect x="1354.2" y="914" width="1.5" height="10.5"/><rect x="1406.5" y="914" width="1.5" height="10.5"/></g>
</g>
</svg>

</body></html>
